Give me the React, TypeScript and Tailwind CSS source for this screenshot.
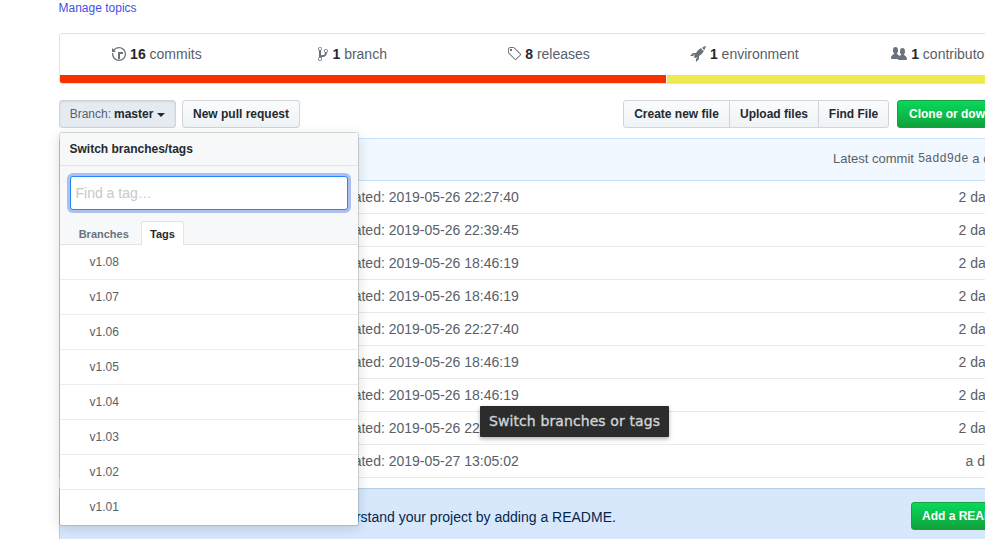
import { ReactNode } from 'react'

const ICONS = {
  history: {
    box: '0 0 14 16',
    d: 'M8 13H6V6h5v2H8v5zM7 1C4.81 1 2.87 2.02 1.59 3.59L0 2v4h4L2.5 4.5C3.55 3.17 5.17 2.3 7 2.3c3.14 0 5.7 2.56 5.7 5.7s-2.56 5.7-5.7 5.7A5.71 5.71 0 0 1 1.3 8c0-.34.03-.67.09-1H.08C.03 7.33 0 7.66 0 8c0 3.86 3.14 7 7 7s7-3.14 7-7-3.14-7-7-7z',
  },
  branch: {
    box: '0 0 10 16',
    d: 'M10 5c0-1.11-.89-2-2-2a1.993 1.993 0 0 0-1 3.72v.3c-.02.52-.23.98-.63 1.38-.4.4-.86.61-1.38.63-.83.02-1.48.16-2 .45V4.72a1.993 1.993 0 0 0-1-3.72C.88 1 0 1.89 0 3a2 2 0 0 0 1 1.72v6.56c-.59.35-1 .99-1 1.72 0 1.11.89 2 2 2 1.11 0 2-.89 2-2 0-.53-.2-1-.53-1.36.09-.06.48-.41.59-.47.25-.11.56-.17.94-.17 1.05-.05 1.95-.45 2.75-1.25S8.95 7.77 9 6.73h-.02C9.59 6.37 10 5.73 10 5zM2 1.8c.66 0 1.2.55 1.2 1.2 0 .65-.55 1.2-1.2 1.2C1.35 4.2.8 3.65.8 3c0-.65.55-1.2 1.2-1.2zm0 12.41c-.66 0-1.2-.55-1.2-1.2 0-.65.55-1.2 1.2-1.2.65 0 1.2.55 1.2 1.2 0 .65-.55 1.2-1.2 1.2zm6-8c-.66 0-1.2-.55-1.2-1.2 0-.65.55-1.2 1.2-1.2.65 0 1.2.55 1.2 1.2 0 .65-.55 1.2-1.2 1.2z',
  },
  tag: {
    box: '0 0 14 16',
    d: 'M7.73 1.73C7.26 1.26 6.62 1 5.96 1H3.5C2.13 1 1 2.13 1 3.5v2.47c0 .66.27 1.3.73 1.77l6.06 6.06c.39.39 1.02.39 1.41 0l4.59-4.59a.996.996 0 0 0 0-1.41L7.73 1.73zM2.38 7.09c-.31-.3-.47-.7-.47-1.13V3.5c0-.88.72-1.59 1.59-1.59h2.47c.42 0 .83.16 1.13.47l6.14 6.13-4.73 4.73-6.13-6.15zM3.01 3h2v2H3V3h.01z',
  },
  rocket: {
    box: '0 0 16 16',
    d: 'M12.17 3.83c-.27-.27-.47-.55-.63-.88-.16-.31-.27-.66-.34-1.02-.58.33-1.16.7-1.73 1.13-.58.44-1.14.94-1.69 1.48-.7.7-1.33 1.81-1.78 2.45H3L0 10h3l2-2c-.34.77-1.02 2.98-1 3l1 1c.02.02 2.23-.64 3-1l-2 2v3l3-3v-3c.64-.45 1.75-1.09 2.45-1.78.55-.55 1.05-1.13 1.47-1.7.44-.58.81-1.16 1.14-1.72-.36-.08-.7-.19-1.03-.34a3.39 3.39 0 0 1-.86-.63zM16 0s-.09.38-.3 1.06c-.2.7-.55 1.58-1.06 2.66-.7-.08-1.27-.33-1.66-.7-.39-.38-.63-.94-.7-1.64C13.36.89 14.27.55 14.95.33 15.63.13 16 0 16 0z',
  },
  people: {
    box: '0 0 16 16',
    d: 'M16 12.999c0 .439-.45 1-1 1H7.995c-.539 0-.994-.447-.995-.999H1c-.54 0-1-.561-1-1 0-2.634 3-4 3-4s.229-.409 0-1c-.841-.621-1.058-.59-1-3 .058-2.419 1.367-3 2.5-3s2.442.58 2.5 3c.058 2.41-.159 2.379-1 3-.229.59 0 1 0 1s1.549.711 2.42 2.088C9.196 9.369 10 8.999 10 8.999s.229-.409 0-1c-.841-.62-1.058-.59-1-3 .058-2.419 1.367-3 2.5-3s2.437.581 2.495 3c.059 2.41-.158 2.38-1 3-.229.59 0 1 0 1s3.005 1.366 3.005 4z',
  },
}

const stats: { icon: keyof typeof ICONS; num: string; label: string }[] = [
  { icon: 'history', num: '16', label: 'commits' },
  { icon: 'branch', num: '1', label: 'branch' },
  { icon: 'tag', num: '8', label: 'releases' },
  { icon: 'rocket', num: '1', label: 'environment' },
  { icon: 'people', num: '1', label: 'contributor' },
]

const rows = [
  ['2019-05-26 22:27:40', '2 days ago'],
  ['2019-05-26 22:39:45', '2 days ago'],
  ['2019-05-26 18:46:19', '2 days ago'],
  ['2019-05-26 18:46:19', '2 days ago'],
  ['2019-05-26 22:27:40', '2 days ago'],
  ['2019-05-26 18:46:19', '2 days ago'],
  ['2019-05-26 18:46:19', '2 days ago'],
  ['2019-05-26 22:27:40', '2 days ago'],
  ['2019-05-27 13:05:02', 'a day ago'],
]

const tags = ['v1.08', 'v1.07', 'v1.06', 'v1.05', 'v1.04', 'v1.03', 'v1.02', 'v1.01']

function Octicon({ name }: { name: keyof typeof ICONS }) {
  const icon = ICONS[name]
  const width = Number(icon.box.split(' ')[2])
  return (
    <svg viewBox={icon.box} width={width} height={16} className="shrink-0 overflow-visible fill-[#6a737d]">
      <path fillRule="evenodd" d={icon.d} />
    </svg>
  )
}

function Btn({ className, children }: { className: string; children: ReactNode }) {
  return (
    <div
      className={`flex h-[28px] items-center border border-[#d1d5da] bg-gradient-to-b from-[#fafbfc] to-[#eff3f6] text-xs font-bold whitespace-nowrap text-[#24292e] ${className}`}
    >
      {children}
    </div>
  )
}

function BranchMenu() {
  return (
    <div className="absolute top-[132px] left-[59px] z-10 w-[300px] overflow-hidden rounded-[3px] border border-[rgba(27,31,35,0.15)] bg-white bg-clip-padding shadow-[0_3px_12px_rgba(27,31,35,0.15)]">
      <div className="flex h-[33px] items-center border-b border-[#e1e4e8] bg-[#f6f8fa] pl-[9.5px] text-xs font-bold text-[#24292e]">
        Switch branches/tags
      </div>
      <div className="bg-[#f6f8fa] pt-[10px]">
        <div className="px-[10px]">
          <div className="flex h-[34px] items-center rounded-[3px] border border-[#2188ff] bg-white pl-[4.5px] text-sm text-[#c5c8cc] shadow-[0_0_0_3px_rgba(3,60,214,0.3)]">
            Find a tag…
          </div>
        </div>
        <div className="mt-[11px] flex h-[24px] border-b border-[#e1e4e8] pl-[8px] text-[11px] font-bold">
          <div className="flex h-[24px] w-[73px] items-center justify-center pt-[2px] pr-[1.5px] text-[#6a737d]">Branches</div>
          <div className="flex h-[24px] w-[43px] items-center justify-center rounded-t-[3px] border border-b-0 border-[#e1e4e8] bg-white pt-[2px] text-[#24292e]">
            Tags
          </div>
        </div>
      </div>
      {tags.map((tag, i) => (
        <div
          key={tag}
          className={`flex h-[35px] items-center pb-[1px] pl-[29.5px] text-xs text-[#586069] ${i < tags.length - 1 ? 'border-b border-[#eaecef]' : ''}`}
        >
          {tag}
        </div>
      ))}
    </div>
  )
}

export default function App() {
  return (
    <div className="relative h-[539px] w-[985px] overflow-hidden bg-white font-['Liberation_Sans',sans-serif] text-[#586069]">
      <div className="ml-[59px] w-[980px]">
        <div className="-ml-[0.5px] h-[33px] pt-px text-xs leading-[14px] text-[#3f51e8]">Manage topics</div>

        <div className="h-[51px] overflow-hidden rounded-[3px] border border-[#dfe2e5]">
          <div className="-ml-px flex h-[41px] pb-[2px]">
            {stats.map((s) => (
              <div key={s.label} className="flex w-[196.2px] items-center justify-center gap-[3px] text-sm whitespace-nowrap">
                <Octicon name={s.icon} />
                <span className="ml-[1px]">
                  <b className="text-[#24292e]">{s.num}</b> {s.label}
                </span>
              </div>
            ))}
          </div>
          <div className="flex h-[8px] gap-px">
            <div className="w-[606px] bg-[#f43200]" />
            <div className="flex-1 bg-[#efea4e]" />
          </div>
        </div>

        <div className="mt-[16px] flex h-[28px] w-[980px]">
          <Btn className="w-[117px] justify-center rounded-[3px] border-[#a8acb1] bg-none bg-[#e6ebf1] shadow-[inset_0_1px_2px_rgba(27,31,35,0.1)]">
            <span className="font-normal text-[#586069]">Branch:</span>
            <span className="ml-[3px]">master</span>
            <span className="mt-[1px] ml-[4px] border-x-[4px] border-t-[4px] border-x-transparent border-t-[#24292e]" />
          </Btn>
          <Btn className="ml-[6px] w-[118px] justify-center rounded-[3px]">New pull request</Btn>
          <div className="ml-auto flex">
            <Btn className="w-[107px] justify-center rounded-l-[3px]">Create new file</Btn>
            <Btn className="-ml-px w-[90px] justify-center">Upload files</Btn>
            <Btn className="-ml-px w-[71px] justify-center rounded-r-[3px]">Find File</Btn>
            <div className="ml-[8px] flex h-[28px] w-[142px] items-center rounded-[3px] border border-[#1f9e3f] bg-gradient-to-b from-[#05da5b] to-[#10a13c] pl-[11px] text-xs font-bold whitespace-nowrap text-white">
              Clone or download
            </div>
          </div>
        </div>

        <div className="mt-[10px] flex h-[43px] items-center rounded-t-[3px] border border-[#c8e1ff] bg-[#f1f8ff] pb-[2px] pl-[773px] text-[13px] whitespace-nowrap">
          Latest commit <span className="ml-[4px] font-['Liberation_Mono',monospace] text-xs">5add9de</span>
          <span className="ml-[4px]">a day ago</span>
        </div>

        <div className="border-x border-[#dfe2e5]">
          {rows.map(([date, age], i) => (
            <div key={i} className="flex h-[33px] items-center justify-between border-b border-[#e8eaec] pr-[11px] pl-[268px] text-sm whitespace-nowrap">
              <span>Updated: {date}</span>
              <span>{age}</span>
            </div>
          ))}
        </div>

        <div className="mt-[10px] flex h-[60px] items-start justify-between border border-[#b5cfe8] bg-[#d7e8fd] pt-[13px] pr-[9px] pl-[15px]">
          <span className="mt-[5px] text-sm whitespace-nowrap text-[#05264c]">
            Help people interested in this repository understand your project by adding a README.
          </span>
          <div className="flex h-[28px] w-[118px] items-center rounded-[3px] border border-[#1f9e3f] bg-gradient-to-b from-[#05da5b] to-[#10a13c] pl-[10px] text-xs font-bold whitespace-nowrap text-white">
            Add a README
          </div>
        </div>
      </div>

      <BranchMenu />

      <div className="absolute top-[406px] left-[480px] z-20 flex h-[31px] w-[189px] items-center justify-center rounded-[1px] bg-[#2c2c2c] pb-[2px] font-['DejaVu_Sans',sans-serif] text-sm tracking-[0.1px] whitespace-nowrap text-[#d0d3d6] shadow-[0_2px_4px_rgba(0,0,0,0.3)] [-webkit-text-stroke:0.35px_#d0d3d6]">
        Switch branches or tags
      </div>
    </div>
  )
}
